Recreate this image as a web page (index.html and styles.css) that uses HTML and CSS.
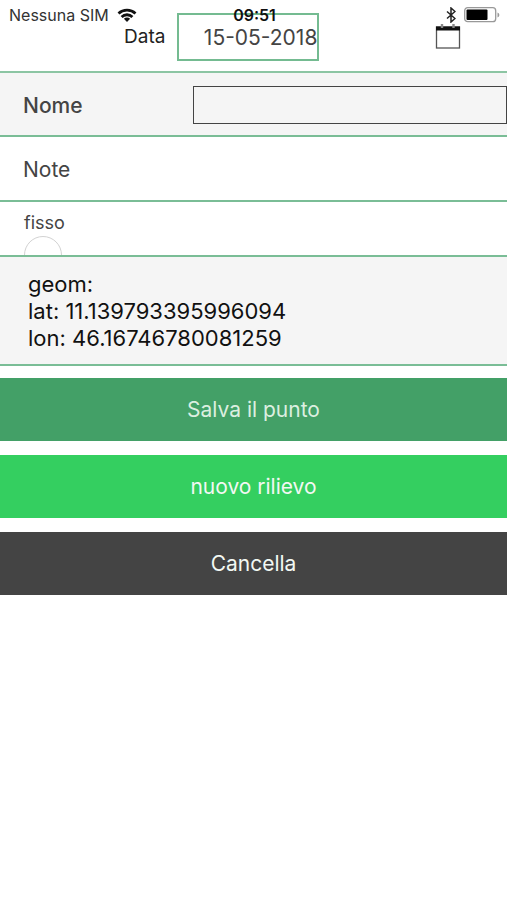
FILE: index.html
```html
<!DOCTYPE html>
<html lang="it">
<head>
<meta charset="utf-8">
<meta name="viewport" content="width=device-width, initial-scale=1">
<title>Rilievo</title>
<link rel="stylesheet" href="styles.css">
</head>
<body>
<div class="status">
  <div class="status-left">
    <span>Nessuna SIM</span>
    <svg class="wifi" viewBox="0 0 20 14" width="20" height="14" aria-hidden="true">
      <g fill="none" stroke="#111" stroke-width="2.8">
        <path d="M1.500 5.400a12.400 12.400 0 0 1 17 0"/>
        <path d="M4.600 8.900a7.800 7.800 0 0 1 10.800 0"/>
      </g>
      <path d="M6.900 10.800a4.400 4.400 0 0 1 6.200 0L10 14z" fill="#111"/>
    </svg>
  </div>
  <span class="clock">09:51</span>
  <div class="status-right">
    <svg viewBox="0 0 10 16" width="10" height="16" aria-hidden="true">
      <path d="M1 4.500l8 7L5 15V1l4 3.500-8 7" fill="none" stroke="#222" stroke-width="1.500"/>
    </svg>
    <svg viewBox="0 0 36 16" width="36" height="16" aria-hidden="true">
      <rect x="0.700" y="0.700" width="31" height="14" rx="3" fill="none" stroke="#999" stroke-width="1.300"/>
      <rect x="2.500" y="2.500" width="21" height="10.500" rx="1" fill="#000"/>
      <path d="M33.500 5.500a2.600 2.600 0 0 1 0 5z" fill="#999"/>
    </svg>
  </div>
</div>
<form class="form">
  <div class="date-row">
    <label class="date-label" for="data">Data</label>
    <input class="date-input" id="data" type="text" value="15-05-2018">
    <button class="calendar" type="button" aria-label="Calendario">
      <svg viewBox="0 0 26 26" width="26" height="26" aria-hidden="true">
        <rect x="1.500" y="3" width="23" height="21" fill="#fff" stroke="#555" stroke-width="1.300"/>
        <path d="M1 2.500h24v4H1z" fill="#111"/>
        <path d="M7 0v4M18.500 0v4" stroke="#888" stroke-width="2.400"/>
      </svg>
    </button>
  </div>
  <div class="row row-shaded">
    <label class="label-strong" for="nome">Nome</label>
    <input class="name-input" id="nome" type="text">
  </div>
  <div class="row row-note">
    <label for="note">Note</label>
    <input class="note-input" id="note" type="text">
  </div>
  <div class="check-row">
    <label for="fisso">fisso</label>
    <input class="check" id="fisso" type="checkbox">
  </div>
  <div class="geom">
    <div>geom:</div>
    <div>lat: 11.139793395996094</div>
    <div>lon: 46.16746780081259</div>
  </div>
  <div class="actions">
    <button class="btn btn-save" type="button">Salva il punto</button>
    <button class="btn btn-new" type="button">nuovo rilievo</button>
    <button class="btn btn-cancel" type="button">Cancella</button>
  </div>
</form>
</body>
</html>
```
FILE: styles.css
```css
* {
  box-sizing: border-box;
}

body {
  margin: 0;
  background: #fff;
  color: #444;
  font-family: Inter, "Liberation Sans", sans-serif;
  font-size: 21px;
}

input,
button {
  margin: 0;
  padding: 0;
  border: 0;
  border-radius: 0;
  background: transparent;
  color: inherit;
  font: inherit;
}

.status {
  position: absolute;
  top: 4px;
  left: 0;
  right: 0;
  z-index: 1;
  display: grid;
  grid-template-columns: 1fr auto 1fr;
  align-items: center;
  height: 22px;
  padding: 0 7px 0 9px;
  color: #333;
  font-size: 16px;
  pointer-events: none;
}

.status-left,
.status-right {
  display: flex;
  align-items: center;
  gap: 8px;
}

.status-right {
  justify-content: flex-end;
}

.clock {
  color: #111;
  font-weight: 600;
}

.date-row {
  display: grid;
  grid-template-columns: 35% 28% 1fr;
  align-items: center;
  height: 73px;
  padding-top: 2px;
  border-bottom: 2px solid #8cc5a3;
}

.date-label {
  padding-right: 12px;
  color: #222;
  font-size: 19px;
  text-align: right;
}

.date-input {
  width: 100%;
  height: 48px;
  padding-top: 2px;
  border: 2px solid #74bb91;
  text-align: right;
}

.calendar {
  justify-self: end;
  width: 26px;
  height: 26px;
  margin-right: 46px;
}

.calendar svg {
  display: block;
}

.row {
  display: grid;
  grid-template-columns: 38% 1fr;
  align-items: center;
  height: 64px;
  padding-top: 2px;
  border-bottom: 2px solid #7abd96;
}

.row label {
  padding-left: 23px;
}

.row-shaded {
  background: #f5f5f5;
}

.row-note {
  height: 65px;
}

.label-strong {
  font-weight: 500;
}

.name-input {
  width: 100%;
  height: 38px;
  border: 1px solid #444;
}

.note-input {
  width: 100%;
  height: 38px;
}

.check-row {
  display: flex;
  flex-direction: column;
  align-items: flex-start;
  gap: 1px;
  height: 55px;
  padding: 9px 24px 0;
  border-bottom: 2px solid #7abd96;
  overflow: hidden;
  font-size: 18px;
  line-height: 24px;
}

.check {
  flex: none;
  width: 38px;
  height: 38px;
  border: 1px solid #d2d2d2;
  border-radius: 50%;
  appearance: none;
}

.geom {
  padding: 14px 28px 12px;
  border-bottom: 2px solid #7abd96;
  background: #f5f5f5;
  color: #111;
  font-size: 22px;
  line-height: 27px;
}

.actions {
  display: flex;
  flex-direction: column;
  gap: 14px;
  padding-top: 12px;
}

.btn {
  height: 63px;
  color: #f2f8f3;
}

.btn-save {
  background: #43a067;
  color: #dcefe0;
}

.btn-new {
  background: #34cf60;
}

.btn-cancel {
  background: #444;
}
```
